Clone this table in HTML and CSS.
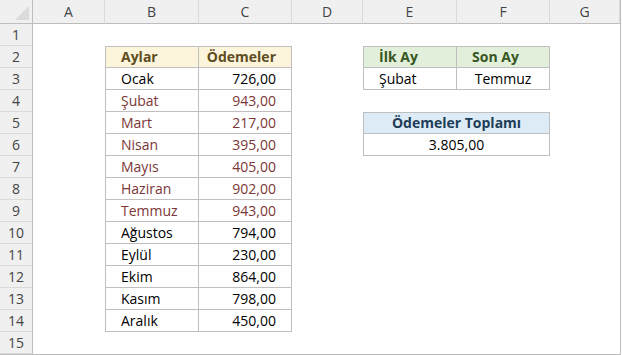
FILE: index.html
```html
<!DOCTYPE html>
<html lang="tr">
<head>
<meta charset="utf-8">
<title>Ödemeler</title>
<link rel="stylesheet" href="styles.css">
</head>
<body>
<div class="sheet">
  <div class="corner"><span class="tri"></span></div>
  <div class="ch">A</div><div class="ch">B</div><div class="ch">C</div><div class="ch">D</div><div class="ch">E</div><div class="ch">F</div><div class="ch">G</div>

  <div class="rh">1</div><div></div><div></div><div></div><div></div><div></div><div></div><div></div>

  <div class="rh">2</div><div></div>
  <div class="t top left hy al">Aylar</div><div class="t top hy ar">Ödemeler</div>
  <div></div>
  <div class="t top left hg al">İlk Ay</div><div class="t top hg al">Son Ay</div>
  <div></div>

  <div class="rh">3</div><div></div>
  <div class="t left al">Ocak</div><div class="t ar">726,00</div>
  <div></div>
  <div class="t left al">Şubat</div><div class="t ac">Temmuz</div>
  <div></div>

  <div class="rh">4</div><div></div>
  <div class="t left al red">Şubat</div><div class="t ar red">943,00</div>
  <div></div><div></div><div></div><div></div>

  <div class="rh">5</div><div></div>
  <div class="t left al red">Mart</div><div class="t ar red">217,00</div>
  <div></div>
  <div class="t top left hb ac span2">Ödemeler Toplamı</div>
  <div></div>

  <div class="rh">6</div><div></div>
  <div class="t left al red">Nisan</div><div class="t ar red">395,00</div>
  <div></div>
  <div class="t left ac span2">3.805,00</div>
  <div></div>

  <div class="rh">7</div><div></div>
  <div class="t left al red">Mayıs</div><div class="t ar red">405,00</div>
  <div></div><div></div><div></div><div></div>

  <div class="rh">8</div><div></div>
  <div class="t left al red">Haziran</div><div class="t ar red">902,00</div>
  <div></div><div></div><div></div><div></div>

  <div class="rh">9</div><div></div>
  <div class="t left al red">Temmuz</div><div class="t ar red">943,00</div>
  <div></div><div></div><div></div><div></div>

  <div class="rh">10</div><div></div>
  <div class="t left al">Ağustos</div><div class="t ar">794,00</div>
  <div></div><div></div><div></div><div></div>

  <div class="rh">11</div><div></div>
  <div class="t left al">Eylül</div><div class="t ar">230,00</div>
  <div></div><div></div><div></div><div></div>

  <div class="rh">12</div><div></div>
  <div class="t left al">Ekim</div><div class="t ar">864,00</div>
  <div></div><div></div><div></div><div></div>

  <div class="rh">13</div><div></div>
  <div class="t left al">Kasım</div><div class="t ar">798,00</div>
  <div></div><div></div><div></div><div></div>

  <div class="rh">14</div><div></div>
  <div class="t left al">Aralık</div><div class="t ar">450,00</div>
  <div></div><div></div><div></div><div></div>

  <div class="rh">15</div><div></div><div></div><div></div><div></div><div></div><div></div><div></div>
</div>
</body>
</html>
```
FILE: styles.css
```css
html, body {
  margin: 0;
  padding: 0;
  background: #ffffff;
}
body {
  font-family: "Open Sans", "Noto Sans", sans-serif;
  font-size: 14px;
  color: #000;
  width: 622px;
  height: 355px;
  overflow: hidden;
}
.sheet {
  display: grid;
  grid-template-columns: 33px 72px 94px 93px 71px 94px 93px 70px;
  grid-template-rows: 24px repeat(15, 22px);
  width: 620px;
  border-right: 1px solid #bdbdbd;
  border-bottom: 1px solid #bdbdbd;
  background: #fff;
}
.corner {
  background: #f0f0f0;
  border-right: 1px solid #bdbdbd;
  border-bottom: 1px solid #bdbdbd;
  position: relative;
}
.tri {
  position: absolute;
  right: 3px;
  bottom: 3px;
  width: 0;
  height: 0;
  border-left: 14px solid transparent;
  border-bottom: 14px solid #dadada;
}
.ch {
  background: #f0f0f0;
  color: #444;
  border-right: 1px solid #dadada;
  border-bottom: 1px solid #bdbdbd;
  display: flex;
  align-items: center;
  justify-content: center;
  line-height: 1;
  font-size: 14px;
}
.rh {
  background: #f0f0f0;
  color: #444;
  border-right: 1px solid #bdbdbd;
  border-bottom: 1px solid #dadada;
  display: flex;
  align-items: center;
  justify-content: center;
  line-height: 1;
  font-size: 14px;
}
.t {
  border-right: 1px solid #bfbfbf;
  border-bottom: 1px solid #bfbfbf;
  display: flex;
  align-items: center;
  white-space: nowrap;
  line-height: 1;
}
.t.top { border-top: 1px solid #bfbfbf; }
.t.left { border-left: 1px solid #bfbfbf; }
.al { justify-content: flex-start; padding-left: 15px; }
.ar { justify-content: flex-end; padding-right: 15px; }
.ac { justify-content: center; }
.span2 { grid-column: span 2; }
.red { color: #7b3636; }
.hy { background: #fdf4dc; color: #5e4d20; font-weight: 700; }
.hg { background: #e2efda; color: #375623; font-weight: 700; }
.hb { background: #ddebf7; color: #203d58; font-weight: 700; }
```
